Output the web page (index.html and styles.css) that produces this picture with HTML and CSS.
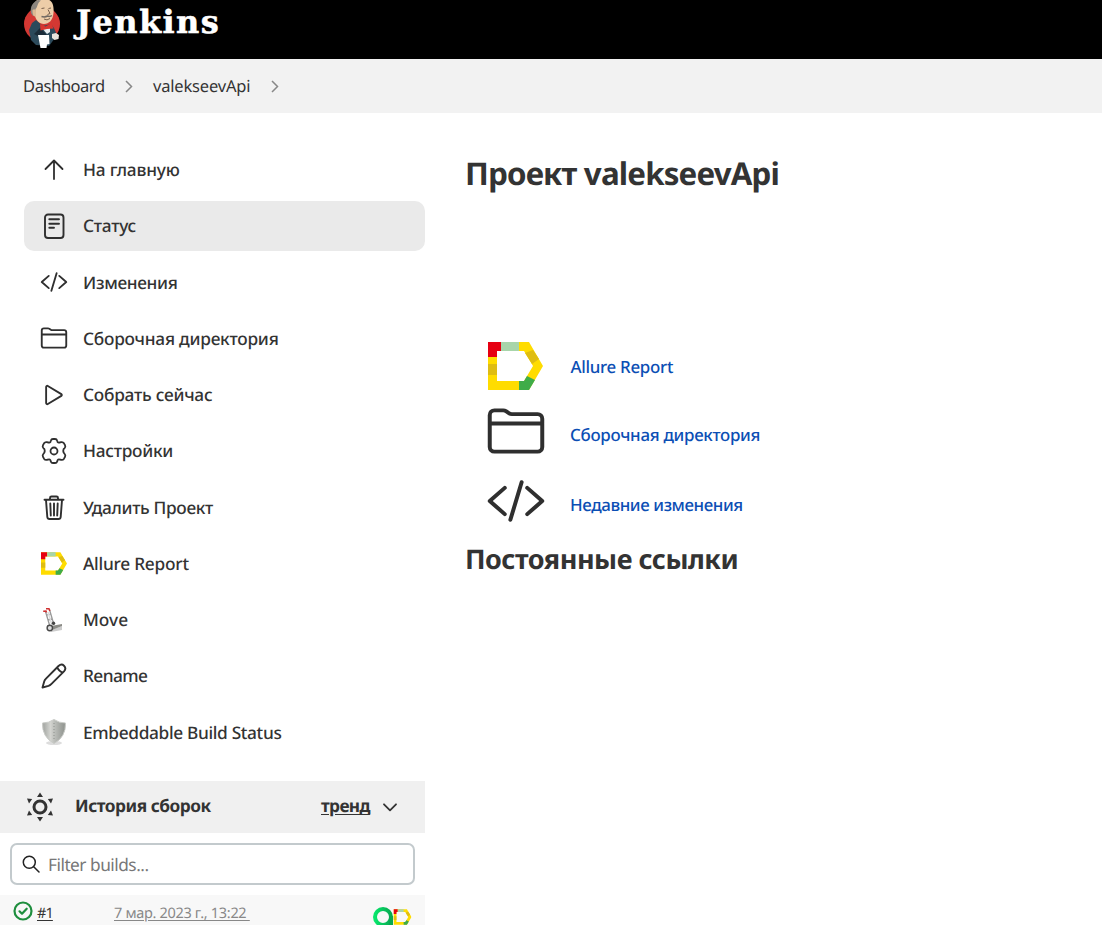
FILE: index.html
```
<!DOCTYPE html>
<html lang="ru">
<head>
<meta charset="utf-8">
<title>valekseevApi [Jenkins]</title>
<link rel="stylesheet" href="styles.css">
</head>
<body>
<svg class="defs" width="0" height="0" aria-hidden="true">
  <symbol id="allure" viewBox="0 0 55 48">
    <path fill="#ffdc00" d="M0 0H41L55 24 41 48H0ZM9 9V39H36L45 24 36 9Z" fill-rule="evenodd"/>
    <path fill="#e60012" d="M0 0H13V9H9V15H0Z"/>
    <path fill="#a8d5aa" d="M13 0H31V9H13Z"/>
    <path fill="#dfbd12" d="M0 22H9V33H0ZM37 11L45 8 51 17 44 22Z"/>
    <path fill="#3fac49" d="M31 39H36L39 34 47 38 41 48H31Z"/>
  </symbol>
  <symbol id="folder" viewBox="0 0 512 512">
    <path class="line" d="M440 432H72a40 40 0 01-40-40V120a40 40 0 0140-40h75.9a40 40 0 0122.2 6.7l27.8 18.6a40 40 0 0022.2 6.7H440a40 40 0 0140 40v240a40 40 0 01-40 40zM32 192h448"/>
  </symbol>
  <symbol id="code" viewBox="0 0 512 512">
    <path class="line" d="M160 368L32 256l128-112M352 368l128-112-128-112M304 96l-96 320"/>
  </symbol>
</svg>

<header class="header">
  <svg class="butler" width="38" height="50" viewBox="0 0 38 50">
    <ellipse cx="19" cy="24" rx="18" ry="17.500" fill="#d33833"/>
    <path fill="#2c4a5b" d="M9 23 13 20 20 26 28 24 31 28 34 35 29 42 26 46 13 45 8 40 6 30Z"/>
    <path fill="#1b2c39" d="M17 28 23 34 24 36H15L11 34Z"/>
    <path fill="#edcda8" d="M11 4C13 0 16-2 23-1 30 0 31 6 30.500 13 30 20 26 24 21 24 16 24 13 20 12 16 9 16 8 11 11 9Z"/>
    <path fill="#8b857e" d="M8 13C7 6 10 2 15 0L18 .5C14 3 15 7 12.500 9L12 15 9.500 15.500Z"/>
    <path fill="#ddb993" d="M9.500 10Q12.500 8 13 12L13 17Q9 16 9.500 10Z"/>
    <path fill="none" stroke="#6b5443" stroke-width=".9" d="M18.500 8.500 21.500 8M25.500 8.500 28 8M25 9.500 27 13.500 24.500 14.500M21 19Q24 21 27 18.500"/>
    <path fill="none" stroke="#6f6862" stroke-width="1.500" d="M18.500 16.500Q22 17.500 24.500 16 27 17 29 15.500"/>
    <path fill="#e7edf0" d="M19 28 27 28 27 32 24 34Z"/>
    <path fill="#d8362f" d="M17 24 22.500 26.500 28.500 23 30.500 28.500 24 29 17.500 30.500Z"/>
    <path fill="#fff" d="M15 35H26L26.500 44 24 44.500 23.500 48H17.500Z"/>
    <path fill="#e8e3dc" d="M29 34 33 33 36 35 35.500 39 31.500 40 29 38Z"/>
  </svg>
  <span class="wordmark">Jenkins</span>
</header>

<nav class="crumbs">
  <span class="crumb c-dash">Dashboard</span>
  <svg class="sep" width="8" height="13" viewBox="0 0 8 13"><path d="M1 1 6.5 6.5 1 12"/></svg>
  <span class="crumb c-api">valekseevApi</span>
  <svg class="sep" width="8" height="13" viewBox="0 0 8 13"><path d="M1 1 6.5 6.5 1 12"/></svg>
</nav>

<div class="page">
  <aside class="side">
    <ul class="tasks">
      <li class="task"><svg class="icon" viewBox="0 0 28 28"><path class="thin" d="M5.5 13 14 4.5 22.500 13M14 5V23"/></svg><span class="t1">На главную</span></li>
      <li class="task active"><svg class="icon" viewBox="0 0 28 28"><rect class="mid" x="5" y="2.500" width="18.500" height="23.500" rx="3"/><path class="mid" d="M9.300 7.200H19M9.300 11.700H19M9.300 15.800H14"/></svg><span class="t2">Статус</span></li>
      <li class="task"><svg class="icon lift"><use href="#code"/></svg><span class="t3">Изменения</span></li>
      <li class="task"><svg class="icon lift"><use href="#folder"/></svg><span class="t4">Сборочная директория</span></li>
      <li class="task"><svg class="icon" viewBox="0 0 512 512"><path class="line" d="M112 111v290c0 17.400 17 28.500 31 20.200l247-148.400c12-7.200 12-26.400 0-33.600L143 90.800c-14-8.300-31 2.800-31 20.200z"/></svg><span class="t5">Собрать сейчас</span></li>
      <li class="task"><svg class="icon" viewBox="0 0 28 28"><circle class="thin" cx="14" cy="14" r="3.500"/><path class="thin" d="M10.800 3.700Q11.300 2 13 2H15Q16.700 2 17.200 3.700L17.700 5.200Q18.400 6 19.500 5.500L21.300 5.100Q23 4.800 24 6.300L25 8.200Q25.800 9.700 24.700 11L23.600 12.200Q22.900 14 23.600 15.500L24.700 17Q25.800 18.300 25 19.800L24 21.700Q23 23.200 21.300 22.900L19.500 22.500Q18.400 22.100 17.700 23L17.200 24.400Q16.700 26 15 26H13Q11.300 26 10.800 24.400L10.300 23Q9.600 22.100 8.500 22.500L6.700 22.900Q5 23.200 4 21.700L3 19.800Q2.200 18.300 3.300 17L4.400 15.500Q5.100 14 4.400 12.200L3.300 11Q2.200 9.700 3 8.200L4 6.300Q5 4.800 6.700 5.100L8.500 5.500Q9.600 6 10.300 5.200Z"/></svg><span class="t6">Настройки</span></li>
      <li class="task"><svg class="icon" viewBox="0 0 28 28"><path class="mid" d="M4.500 5.800H23.500M6 6 7.300 23Q7.500 25 9.500 25H18.500Q20.500 25 20.700 23L22 6M10 5.500V4Q10 2.500 11.500 2.500H16.500Q18 2.500 18 4V5.500M10.300 9.500 10.800 21.500M14 9.500V21.500M17.700 9.500 17.200 21.500"/></svg><span class="t7">Удалить Проект</span></li>
      <li class="task"><svg class="icon allure-small"><use href="#allure"/></svg><span class="t8">Allure Report</span></li>
      <li class="task"><svg class="icon" viewBox="0 0 28 28"><path fill="#ccc" d="M11 24 22 20 22 24 11 26Z"/><path fill="none" stroke="#999" stroke-width="1.300" d="M5.500 5.500 9.500 19M9.500 3.500 14 19M7 9 10.500 8M8 14 12 13"/><path fill="none" stroke="#ddd" stroke-width="1.500" d="M8 6 12 19"/><path fill="none" stroke="#cf3030" stroke-width="1.500" d="M3.200 5.200 6 5 6.500 6.500M6 2.800 9 2.700 9.800 5"/><path fill="#8b8b86" d="M11 20 22 18 22 20 12 24Z"/><circle cx="9.800" cy="22" r="2.700" fill="#ddd" stroke="#494949" stroke-width="1.400"/><circle cx="13.500" cy="17.300" r="1.700" fill="#444"/></svg><span class="t9">Move</span></li>
      <li class="task"><svg class="icon" viewBox="0 0 28 28"><path class="mid" d="M2.500 25.500 4.200 19.500Q4.600 18 6 16.600L18.500 4Q21.500 1.300 24 3.700 26.700 6.300 24 9.300L11.500 21.800Q10 23.300 8.500 23.800ZM17 5.500Q19 9 22.500 10.800"/></svg><span class="t10">Rename</span></li>
      <li class="task"><svg class="icon lift" viewBox="0 0 28 28"><defs><linearGradient id="metal"><stop stop-color="#9fa29e"/><stop offset=".35" stop-color="#d4d5d1"/><stop offset=".5" stop-color="#bfc1bd"/><stop offset="1" stop-color="#8d918c"/></linearGradient></defs><ellipse cx="14" cy="25" rx="8" ry="2" fill="#ddd"/><path fill="url(#metal)" stroke="#c9cbc7" d="M2.500 5Q9 5 14 1.500 19 5 25.500 5 26 19 14 25.500 2 19 2.500 5Z"/><path stroke="#8e918d" stroke-dasharray="1 2" d="M14 5V22"/></svg><span class="t11">Embeddable Build Status</span></li>
    </ul>

    <section class="history">
      <div class="history-head">
        <svg class="sun" width="28" height="30" viewBox="0 0 28 30"><circle cx="14" cy="15" r="6" fill="none" stroke="#333" stroke-width="3"/><path fill="#333" d="M14 .5 17 5H11ZM14 29.500 17 25H11ZM1 6.500 6.200 7 3 11.500ZM27 6.500 21.800 7 25 11.500ZM1 23.500 3 18.500 6.200 23ZM27 23.500 25 18.500 21.800 23Z"/></svg>
        <span class="history-title">История сборок</span>
        <a class="trend">тренд</a>
        <svg class="chev" width="14" height="9" viewBox="0 0 14 9"><path d="M1 1.300 7 7.300 13 1.300"/></svg>
      </div>
      <div class="search">
        <svg width="18" height="18" viewBox="0 0 18 18"><circle cx="7.300" cy="7.300" r="6"/><path d="M11.700 11.700 17 17"/></svg>
        <span class="placeholder">Filter builds...</span>
      </div>
      <div class="build">
        <svg class="ok" width="20" height="20" viewBox="0 0 20 20"><circle cx="10" cy="10" r="8.500"/><path d="M6.500 10.300 9 12.700 13.700 7.700"/></svg>
        <a class="num">#1</a>
        <a class="date">7 мар. 2023 г., 13:22&nbsp;</a>
        <svg class="badge" width="39" height="19" viewBox="0 0 39 19"><defs><linearGradient id="qa"><stop stop-color="#08e56b"/><stop offset="1" stop-color="#08a951"/></linearGradient></defs><circle cx="10" cy="10" r="8" fill="none" stroke="url(#qa)" stroke-width="4"/><path d="M18 9V19" stroke="#08a951" stroke-width="4"/><use href="#allure" x="20.500" y="2" width="18" height="16"/></svg>
      </div>
    </section>
  </aside>

  <main class="main">
    <h1>Проект valekseevApi</h1>
    <div class="links">
      <div class="link-row"><svg class="big big-allure"><use href="#allure"/></svg><a class="l1">Allure Report</a></div>
      <div class="link-row"><svg class="big big-folder"><use href="#folder"/></svg><a class="l2">Сборочная директория</a></div>
      <div class="link-row"><svg class="big"><use href="#code"/></svg><a class="l3">Недавние изменения</a></div>
    </div>
    <h2>Постоянные ссылки</h2>
  </main>
</div>
</body>
</html>
```
FILE: styles.css
```
* { box-sizing: border-box; }
html, body { height: 925px; overflow: hidden; }
body {
  margin: 0;
  background: #fff;
  color: #333;
  font: 500 17.3px/24px "Noto Sans", "Open Sans", sans-serif;
  white-space: nowrap;
  text-rendering: geometricPrecision;
}
svg { display: block; flex: none; }
.defs { display: none; }
.line, .thin, .mid { fill: none; stroke: #2f2f2f; stroke-linecap: round; stroke-linejoin: round; }
.line { stroke-width: 34; }
.thin { stroke-width: 1.8; }
.mid { stroke-width: 1.9; }

.header { display: flex; height: 59px; background: #000; padding-left: 23px; }
.wordmark {
  margin-left: 15px;
  color: #fff;
  font: bold 32px/45px "DejaVu Serif", serif;
  letter-spacing: 1.4px;
  -webkit-text-stroke: .5px #fff;
}
.crumbs { display: flex; align-items: center; height: 54px; padding-left: 23px; background: #f2f2f2; }
.crumb { font-size: 16.5px; font-weight: 450; }
.c-dash { width: 102px; letter-spacing: -.42px; }
.c-api { width: 118px; margin-left: 20px; letter-spacing: -.18px; }
.sep path { fill: none; stroke: #888; stroke-width: 1.5; }

.page { display: flex; height: 812px; }
.side { width: 425px; flex: none; }
.tasks { list-style: none; margin: 0; padding: 32px 0 0 24px; height: 668px; }
.task { display: flex; align-items: center; height: 50px; margin-bottom: 6.25px; padding-left: 16px; border-radius: 10px; }
.task span { margin-top: 2px; }
.task.active { background: #eaeaea; }
.icon { width: 28px; height: 28px; margin-right: 15px; }
.icon.lift { margin-bottom: 2px; }
.icon.allure-small { width: 26px; height: 23px; margin: 0 16.5px 1px .5px; }
.t1 { letter-spacing: -.2px; }
.t2, .t4, .t5, .t8 { letter-spacing: -.24px; }
.t6 { letter-spacing: -.27px; }
.t3, .t7, .t11 { letter-spacing: -.34px; }
.t10 { letter-spacing: -.57px; }

.history-head { display: flex; align-items: center; height: 52px; background: #f0f0f0; padding-left: 26px; font-weight: 700; }
.history-title { width: 246px; margin: 0 0 0 21px; letter-spacing: -.48px; }
.trend { width: 50px; letter-spacing: -.65px; text-decoration: underline; text-underline-offset: 2px; }
.chev { margin-left: 12px; }
.chev path { fill: none; stroke: #333; stroke-width: 1.8; stroke-linecap: round; stroke-linejoin: round; }
.search {
  display: flex; align-items: center;
  height: 42px; margin: 10px 10px 10px; padding-left: 10px;
  border: 2px solid #c3cacd; border-radius: 7px;
}
.search svg { fill: none; stroke: #222; stroke-width: 1.5; stroke-linecap: round; }
.placeholder { margin: 4px 0 0 8px; color: #777; font-weight: 400; letter-spacing: -.5px; }
.build { display: flex; height: 30px; padding: 6px 0 0 13px; background: #f8f8f8; font-size: 14.5px; line-height: 24px; font-weight: 400; }
.ok { fill: none; stroke: #1e8e3e; stroke-width: 2.2; stroke-linecap: round; stroke-linejoin: round; }
.num, .date { text-decoration: underline; text-underline-offset: 2px; }
.num { width: 77px; margin-left: 4px; letter-spacing: -.9px; }
.date { width: 259px; color: #888; letter-spacing: -.32px; }
.badge { margin-top: 6px; }

.main { padding: 40px 0 0 40px; }
h1, h2 { margin: 0; font-weight: 700; }
h1 { font-size: 31.3px; line-height: 42px; letter-spacing: -.83px; }
h2 { font-size: 27px; line-height: 36px; letter-spacing: -.5px; }
.links { margin: 137px 0 0 21px; height: 209px; }
.link-row { display: flex; align-items: center; height: 69px; color: #0b4eb4; font-size: 16.9px; }
.big { width: 60px; height: 60px; margin: 0 24px 8px 0; }
.big-allure { width: 55px; height: 48px; margin: 0 27.500px 2px 2px; }
.big-folder { margin-bottom: 9px; }
.big .line { stroke-width: 32; }
.l1 { letter-spacing: -.3px; }
.l2 { margin-bottom: 2px; letter-spacing: -.28px; }
.l3 { letter-spacing: -.4px; }
```
